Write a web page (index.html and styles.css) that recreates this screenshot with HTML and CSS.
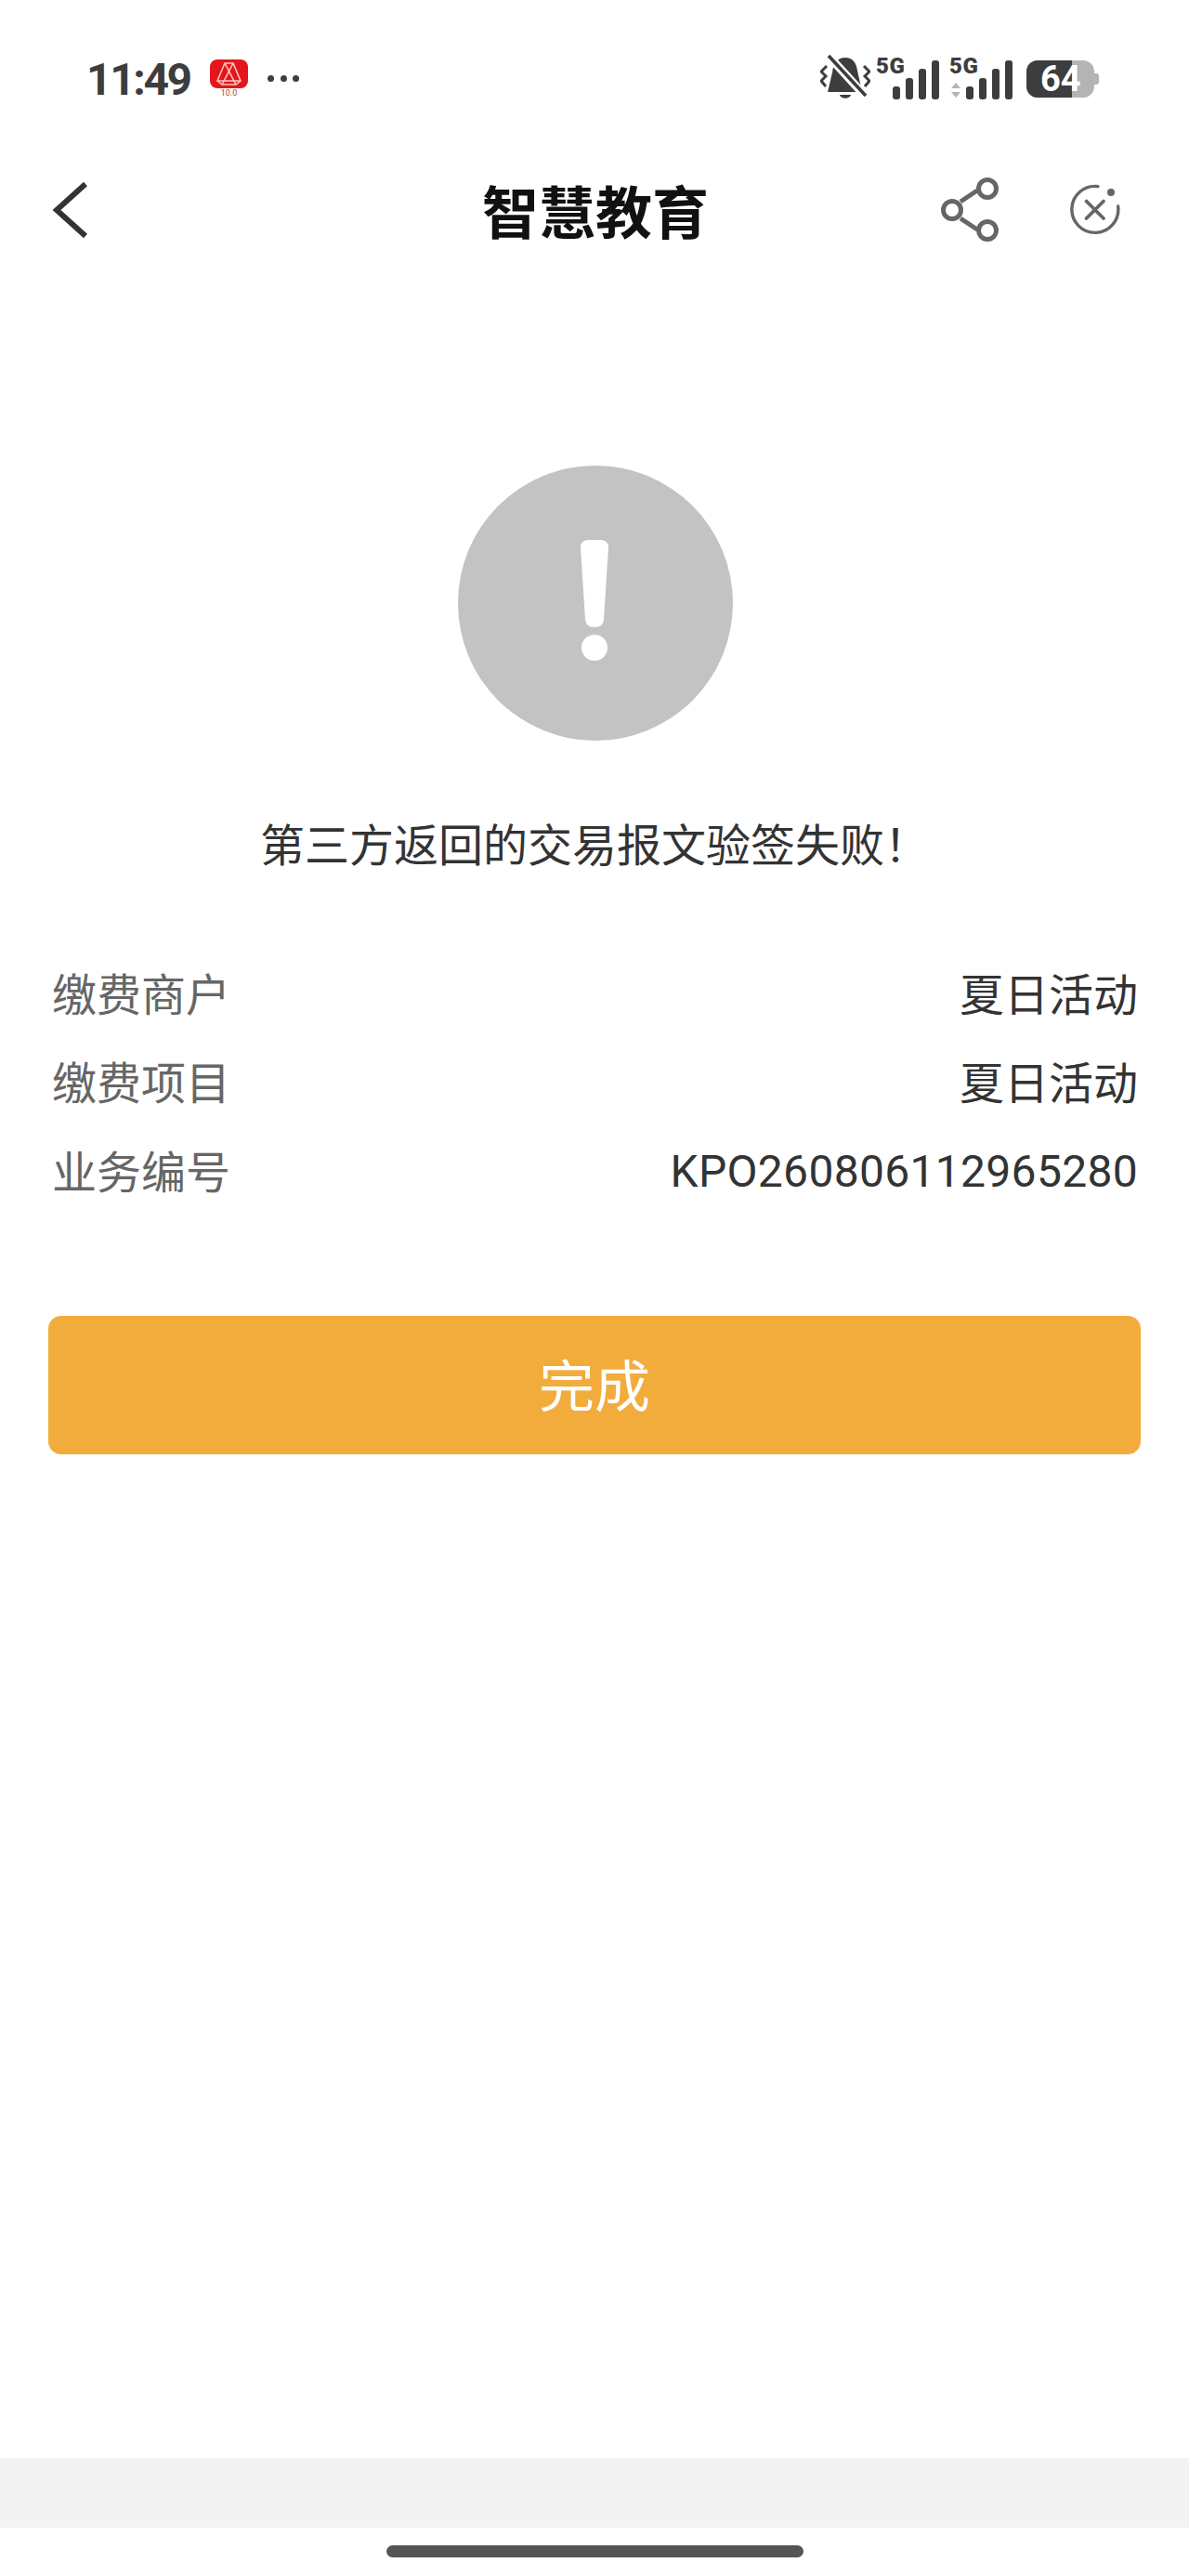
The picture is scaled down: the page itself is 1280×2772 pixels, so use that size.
FILE: index.html
```html
<!DOCTYPE html>
<html>

	<head>
		<meta charset="UTF-8">
		<title>智慧教育</title>
		<link rel="stylesheet" href="styles.css">
	</head>

	<body>
		<div id="page">
			<div class="status">
				<div class="statusLeft">
					<span class="time">11:49</span>
					<span class="appIcon">
						<svg width="41" height="42" viewBox="0 0 41 42">
							<rect x="0" y="0" width="41" height="31" rx="8" fill="#e5161b"/>
							<path d="M16 4 L25 4 L33 23 L28 27 L13 27 L8 23 Z M16 4 L28 27 M25 4 L13 27 M8 23 L33 23" fill="none" stroke="#f6c8bd" stroke-width="1.6"/>
						</svg>
						<span class="appVer">10.0</span>
					</span>
					<span class="dots"><i></i><i></i><i></i></span>
				</div>
				<div class="statusRight">
					<svg class="bell" width="54" height="52" viewBox="0 0 54 52">
						<path d="M27 4 C36 4 39 11 40 18 L44 36 L48 41 L8 41 L13 20 C14 11 18 4 27 4 Z" fill="#3d3d3d"/>
						<path d="M21 44 H33 C32 49 22 49 21 44 Z" fill="#3d3d3d"/>
						<path d="M8 1 L49 46" stroke="#fff" stroke-width="9"/>
						<path d="M9 2 L49 45" stroke="#3d3d3d" stroke-width="3.6"/>
						<path d="M7 13 L1 19 L6 24 L1 29 L6 35 M47 13 L53 19 L48 24 L53 29 L48 35" fill="none" stroke="#3d3d3d" stroke-width="3"/>
					</svg>
					<svg class="signal" width="72" height="56" viewBox="0 -6 72 56">
						<text x="0" y="19" class="netText">5G</text>
						<rect x="18" y="33" width="8" height="14" rx="3"/>
						<rect x="32" y="24" width="8" height="23" rx="3"/>
						<rect x="46" y="14" width="8" height="33" rx="3"/>
						<rect x="60" y="5" width="8" height="42" rx="3"/>
					</svg>
					<svg class="signal" width="72" height="56" viewBox="0 -6 72 56">
						<text x="0" y="19" class="netText">5G</text>
						<path d="M2 35 L7 29 L12 35 Z M2 39 L12 39 L7 45 Z" class="arrows"/>
						<rect x="18" y="33" width="8" height="14" rx="3"/>
						<rect x="32" y="24" width="8" height="23" rx="3"/>
						<rect x="46" y="14" width="8" height="33" rx="3"/>
						<rect x="60" y="5" width="8" height="42" rx="3"/>
					</svg>
					<div class="battery">
						<div class="batteryFill"></div>
						<span class="batteryNum">64</span>
						<i class="batteryCap"></i>
					</div>
				</div>
			</div>

			<div class="nav">
				<svg class="back" width="40" height="60" viewBox="0 0 40 60">
					<path d="M36 2 L5 30 L36 58" fill="none" stroke="#333" stroke-width="6"/>
				</svg>
				<span class="title">智慧教育</span>
				<svg class="share" width="64" height="70" viewBox="0 0 64 70">
					<path d="M22 26 L40 14 M22 44 L40 56" stroke="#666" stroke-width="5"/>
					<circle cx="13" cy="35" r="9.5" fill="none" stroke="#666" stroke-width="5"/>
					<circle cx="51" cy="12" r="9.5" fill="none" stroke="#666" stroke-width="5"/>
					<circle cx="51" cy="57" r="9.5" fill="none" stroke="#666" stroke-width="5"/>
				</svg>
				<svg class="close" width="56" height="56" viewBox="0 0 56 56">
					<path d="M31 2.6 A25 25 0 1 0 52.6 24" fill="none" stroke="#666" stroke-width="3.4" stroke-linecap="round"/>
					<circle cx="45" cy="9" r="4" fill="#666"/>
					<path d="M18.5 18.5 L37 37 M37 18.5 L18.5 37" stroke="#666" stroke-width="3.8" stroke-linecap="round"/>
				</svg>
			</div>

			<div class="main">
				<svg class="alert" width="296" height="296" viewBox="0 0 296 296">
					<circle cx="148" cy="148" r="148" fill="#c3c3c3"/>
					<path d="M141 80 H153 Q162 80 162 88 L157 166 Q156 174 147 174 Q138 174 137 166 L132 88 Q132 80 141 80 Z" fill="#fff"/>
					<circle cx="147" cy="196" r="14" fill="#fff"/>
				</svg>
				<p class="msg">第三方返回的交易报文验签失败！</p>
				<ul class="info">
					<li><span class="label">缴费商户</span><span class="val">夏日活动</span></li>
					<li><span class="label">缴费项目</span><span class="val">夏日活动</span></li>
					<li><span class="label">业务编号</span><span class="val num">KPO260806112965280</span></li>
				</ul>
				<a class="btn" href="javascript:;">完成</a>
			</div>

			<div class="band"></div>
			<div class="homeBar"><i></i></div>
		</div>
	</body>

</html>
```

FILE: styles.css
```css
html,
body {
	width: 100%;
	height: 100%;
	margin: 0;
}

body {
	background: #fff;
	font-family: Roboto, "Noto Sans CJK SC", sans-serif;
}

ul,
li {
	margin: 0;
	padding: 0;
	list-style: none;
}

p {
	margin: 0;
}

a {
	text-decoration: none;
}

#page {
	width: 1280px;
	height: 2772px;
	display: flex;
	flex-direction: column;
	overflow: hidden;
}

.status {
	height: 170px;
	box-sizing: border-box;
	padding: 58px 97px 0 93px;
	display: flex;
	justify-content: space-between;
	align-items: flex-start;
}

.statusLeft {
	display: flex;
	align-items: flex-start;
}

.time {
	font-size: 48px;
	line-height: 56px;
	font-weight: 700;
	letter-spacing: -2.4px;
	color: #3d3d3d;
	width: 133px;
}

.appIcon {
	position: relative;
	display: block;
	width: 41px;
	height: 46px;
	margin-top: 6px;
}

.appVer {
	position: absolute;
	left: 0;
	right: 0;
	top: 30px;
	text-align: center;
	font-size: 9px;
	line-height: 12px;
	color: #c0392b;
}

.dots {
	display: flex;
	gap: 6.5px;
	margin: 23px 0 0 21px;
}

.dots i {
	width: 7px;
	height: 7px;
	border-radius: 50%;
	background: #3d3d3d;
}

.statusRight {
	display: flex;
	align-items: flex-start;
}

.bell {
	margin-right: 6px;
}

.signal {
	margin-right: 7px;
	margin-top: -4px;
}

.signal rect {
	fill: #3d3d3d;
}

.arrows {
	fill: #b4b4b4;
}

.netText {
	font: 900 24px Roboto, sans-serif;
	letter-spacing: 0.5px;
	fill: #3d3d3d;
}

.battery {
	position: relative;
	width: 73px;
	height: 40px;
	margin: 7px 5px 0 4px;
	border-radius: 12px;
	background: #b4b4b4;
}

.batteryFill {
	width: 49px;
	height: 40px;
	border-radius: 12px 0 0 12px;
	background: #3d3d3d;
}

.batteryNum {
	position: absolute;
	left: 15px;
	top: -4px;
	font-size: 38px;
	line-height: 48px;
	font-weight: 700;
	color: #fff;
}

.batteryCap {
	position: absolute;
	right: -5px;
	top: 14px;
	width: 5px;
	height: 12px;
	border-radius: 0 3px 3px 0;
	background: #b4b4b4;
}

.nav {
	position: relative;
	height: 112px;
	display: flex;
	align-items: center;
}

.back {
	margin-left: 56px;
}

.title {
	position: absolute;
	left: 2px;
	right: 0;
	text-align: center;
	font: 700 61px/108px "Noto Sans CJK SC", sans-serif;
	color: #111;
}

.share {
	margin-left: auto;
}

.close {
	margin: 0 73px 0 75px;
}

.main {
	display: flex;
	flex-direction: column;
	align-items: center;
	padding: 219px 52px 0;
}

.alert {
	margin-left: 2px;
}

.msg {
	margin-top: 74px;
	font: 48px/70px "Noto Sans CJK SC", sans-serif;
	color: #333;
}

.info {
	width: 100%;
	box-sizing: border-box;
	padding: 0 3px 0 4px;
	margin-top: 78px;
}

.info li {
	height: 95.5px;
	display: flex;
	justify-content: space-between;
	align-items: center;
	font-size: 48px;
	font-family: "Noto Sans CJK SC", sans-serif;
}

.label {
	color: #666;
}

.val {
	color: #333;
	font-family: Roboto, "Noto Sans CJK SC", sans-serif;
}

.val.num {
	letter-spacing: 0.3px;
	margin-top: 5px;
}

.btn {
	width: 100%;
	height: 149px;
	margin-top: 110px;
	border-radius: 14px;
	background: #f2ac3c;
	color: #fff;
	font: 60px/143px "Noto Sans CJK SC", sans-serif;
	text-align: center;
}

.band {
	height: 75px;
	margin-top: auto;
	background: #f3f3f3;
}

.homeBar {
	height: 52px;
	display: flex;
	justify-content: center;
	padding-top: 19px;
	box-sizing: border-box;
}

.homeBar i {
	width: 449px;
	height: 13px;
	border-radius: 7px;
	background: #555;
}
```
